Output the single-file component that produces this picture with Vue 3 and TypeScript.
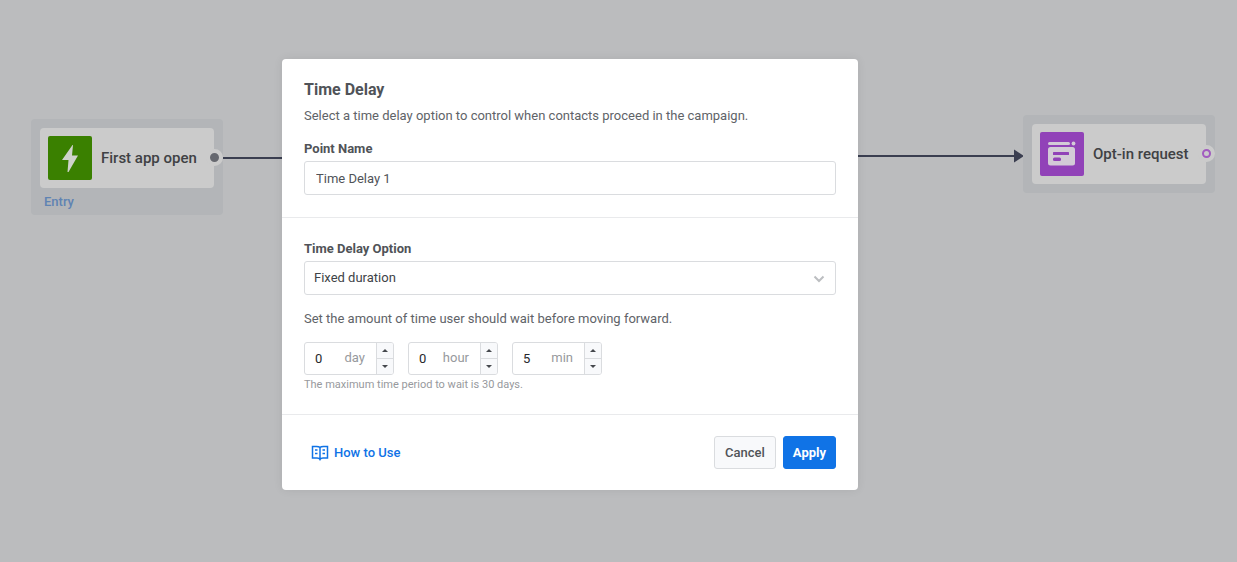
<script setup lang="ts">
import { ref } from 'vue'

interface DurationField {
  id: string
  unit: string
  value: number
}

const pointName = ref('Time Delay 1')
const option = ref('fixed')
const fields = ref<DurationField[]>([
  { id: 'days', unit: 'day', value: 0 },
  { id: 'hours', unit: 'hour', value: 0 },
  { id: 'minutes', unit: 'min', value: 5 },
])

function step(field: DurationField, delta: number): void {
  field.value = Math.max(0, Number(field.value) + delta)
}
</script>

<template>
  <main class="page">
    <div class="canvas">
      <div class="edge edge-in"></div>
      <div class="edge edge-out">
        <svg class="arrow" width="10" height="14" viewBox="0 0 10 14" aria-hidden="true"><path d="M0 0.5 10 7 0 13.5z" /></svg>
      </div>

      <section class="group group-entry">
        <div class="node">
          <svg class="node-icon" viewBox="0 0 44 44" aria-hidden="true">
            <rect width="44" height="44" rx="2" fill="#3a8000" />
            <path d="M24.500 9 14 24h6.500L19.500 36h1L30 19.500h-6L25 9z" fill="#cfd3cb" />
          </svg>
          <span class="node-name">First app open</span>
          <span class="port port-solid"></span>
        </div>
        <span class="group-name">Entry</span>
      </section>

      <section class="group group-target">
        <div class="node">
          <svg class="node-icon" viewBox="0 0 44 44" aria-hidden="true">
            <rect width="44" height="44" rx="2" fill="#9142b8" />
            <g fill="#d3cbd7">
              <rect x="8" y="10" width="22" height="3" rx="1.500" />
              <circle cx="33.500" cy="11.500" r="1.900" />
              <rect x="8" y="15" width="27" height="18.500" rx="2.500" />
            </g>
            <rect x="13" y="20" width="16" height="3" rx="0.500" fill="#9142b8" />
            <rect x="13" y="25.500" width="8" height="3.500" rx="1.500" fill="#9142b8" />
          </svg>
          <span class="node-name">Opt-in request</span>
          <span class="port port-ring"></span>
        </div>
      </section>
    </div>

    <div class="overlay">
      <form class="dialog" role="dialog" aria-labelledby="dialog-title" @submit.prevent>
        <section class="block block-head">
          <h1 id="dialog-title">Time Delay</h1>
          <p class="text">Select a time delay option to control when contacts proceed in the campaign.</p>
          <label class="label" for="point-name">Point Name</label>
          <input id="point-name" v-model="pointName" class="control" type="text" />
        </section>

        <section class="block block-option">
          <label class="label" for="delay-option">Time Delay Option</label>
          <div class="select-wrap">
            <select id="delay-option" v-model="option" class="control">
              <option value="fixed">Fixed duration</option>
            </select>
            <svg class="chevron" width="12" height="8" viewBox="0 0 12 8" aria-hidden="true"><path d="M1.500 1.500 6 6l4.500-4.500" /></svg>
          </div>
          <p class="text wait">Set the amount of time user should wait before moving forward.</p>
          <div class="durations">
            <div v-for="field in fields" :key="field.id" class="duration">
              <input :id="field.id" v-model="field.value" class="amount" type="text" inputmode="numeric" />
              <label class="unit" :for="field.id">{{ field.unit }}</label>
              <div class="steps">
                <button type="button" :aria-label="`Increase ${field.unit}`" @click="step(field, 1)">
                  <svg width="6" height="3" viewBox="0 0 6 3" aria-hidden="true"><path d="M0 3 3 0l3 3z" /></svg>
                </button>
                <button type="button" :aria-label="`Decrease ${field.unit}`" @click="step(field, -1)">
                  <svg width="6" height="3" viewBox="0 0 6 3" aria-hidden="true"><path d="M0 0h6L3 3z" /></svg>
                </button>
              </div>
            </div>
          </div>
          <p class="hint">The maximum time period to wait is 30 days.</p>
        </section>

        <footer class="foot">
          <a class="help" href="#how-to-use">
            <svg width="18" height="16" viewBox="0 0 18 16" aria-hidden="true">
              <path d="M9 2.500C8 1.500 7 1.500 5.500 1.500H1.500v11.500H6c1.500 0 2.400.3 3 1.500.6-1.200 1.500-1.500 3-1.500h4.500V1.500h-4C11 1.500 10 1.500 9 2.500zM9 2.500V15M4 5h2.500M4 8.500h2.500M11.500 5H14M11.500 8.500H14" />
            </svg>
            <span>How to Use</span>
          </a>
          <button class="btn btn-plain" type="button">Cancel</button>
          <button class="btn btn-primary" type="submit">Apply</button>
        </footer>
      </form>
    </div>
  </main>
</template>

<style>
body {
  background: #bbbcbe;
}
</style>

<style scoped>
.page,
.page * {
  box-sizing: border-box;
}

.page {
  position: relative;
  min-height: 100vh;
  overflow: hidden;
  background: #bbbcbe;
  color: #505358;
  font-family: Roboto, "Liberation Sans", sans-serif;
  font-size: 13px;
  line-height: 20px;
}

input,
select,
button {
  margin: 0;
  font: inherit;
  color: inherit;
}

.canvas {
  position: absolute;
  inset: 0;
}

.edge {
  position: absolute;
  height: 2px;
  background: #3a3e50;
}

.edge-in {
  left: 222px;
  top: 157px;
  width: 348px;
}

.edge-out {
  left: 570px;
  top: 155px;
  width: 446px;
}

.arrow {
  position: absolute;
  right: -8px;
  top: -6px;
  fill: #3a3e50;
}

.group {
  position: absolute;
  width: 192px;
  padding: 9px;
  border-radius: 4px;
  background: #b3b5b8;
}

.group-entry {
  left: 31px;
  top: 119px;
  padding-bottom: 3px;
}

.group-target {
  left: 1023px;
  top: 115px;
}

.node {
  position: relative;
  display: flex;
  align-items: center;
  gap: 9px;
  height: 60px;
  padding: 0 8px;
  border-radius: 4px;
  background: #cbcbcb;
}

.node-icon {
  flex: none;
  width: 44px;
  height: 44px;
}

.node-name {
  color: #404144;
  font-size: 15px;
  font-weight: 500;
  white-space: nowrap;
}

.port {
  position: absolute;
  right: -9px;
  top: 21px;
  width: 17px;
  height: 17px;
  border: 4px solid #cbcbcb;
  border-radius: 50%;
}

.port-solid {
  background: #66686f;
}

.port-ring::before {
  content: "";
  display: block;
  box-sizing: border-box;
  width: 9px;
  height: 9px;
  border: 2px solid #a25cc0;
  border-radius: 50%;
  background: #cbcbcb;
}

.group-name {
  display: block;
  padding: 4px 4px 0;
  color: #5f83b3;
  font-weight: 500;
}

.overlay {
  position: relative;
  display: grid;
  grid-template-columns: 282fr minmax(auto, 576px) 379fr;
  padding: 59px 0;
}

.dialog {
  grid-column: 2;
  border-radius: 4px;
  background: #fff;
  box-shadow: 0 0 10px rgba(0, 0, 0, 0.08);
}

.block {
  padding: 20px 22px 22px;
  border-bottom: 1px solid #e9eaec;
}

.block-option {
  padding: 21px 22px 19px;
}

h1,
p {
  margin: 0;
}

h1 {
  font-size: 16px;
  font-weight: 700;
  line-height: 22px;
}

.text {
  padding-top: 5px;
  color: #606368;
}

.label {
  display: block;
  margin-top: 13px;
  padding-bottom: 2px;
  font-weight: 700;
}

.block-option .label {
  margin-top: 0;
}

.control {
  display: block;
  width: 100%;
  height: 34px;
  padding: 0 11px;
  border: 1px solid #dadcdf;
  border-radius: 3px;
  background: #fff;
  appearance: none;
}

.select-wrap {
  position: relative;
}

select.control {
  padding: 0 9px;
  color: #404347;
}

.chevron {
  position: absolute;
  right: 11px;
  top: 14px;
  fill: none;
  stroke: #bcbec1;
  stroke-width: 2;
  pointer-events: none;
}

.wait {
  padding: 14px 0 13px;
}

.durations {
  display: flex;
  gap: 14px;
}

.duration {
  display: flex;
  width: 90px;
  height: 33px;
  border: 1px solid #dadcdf;
  border-radius: 3px;
  overflow: hidden;
}

.amount {
  flex: 1;
  min-width: 0;
  padding: 0 0 0 10px;
  border: 0;
  background: none;
  color: #26282b;
}

.unit {
  padding: 5px 11px 0 0;
  color: #97999d;
}

.steps {
  display: flex;
  flex-direction: column;
  width: 17px;
  border-left: 1px solid #dadcdf;
  background: #f8f9fb;
}

.steps button {
  display: flex;
  flex: 1;
  align-items: center;
  justify-content: center;
  padding: 0;
  border: 0;
  background: none;
  fill: #45484d;
}

.steps button + button {
  border-top: 1px solid #dadcdf;
}

.hint {
  color: #97999d;
  font-size: 11px;
  line-height: 20px;
}

.foot {
  display: flex;
  align-items: center;
  gap: 7px;
  padding: 21px 22px;
}

.help {
  display: flex;
  align-items: center;
  gap: 5px;
  margin-right: auto;
  padding-left: 7px;
  color: #1073e6;
  font-weight: 500;
  text-decoration: none;
}

.help svg {
  fill: none;
  stroke: #1073e6;
  stroke-width: 1.5;
}

.btn {
  height: 33px;
  padding: 0 10px;
  border: 1px solid #dadcdf;
  border-radius: 3px;
  background: #f8f9fb;
  font-weight: 500;
}

.btn-primary {
  padding: 0 9px;
  border-color: #1073e6;
  background: #1073e6;
  color: #fff;
  font-weight: 700;
}
</style>
